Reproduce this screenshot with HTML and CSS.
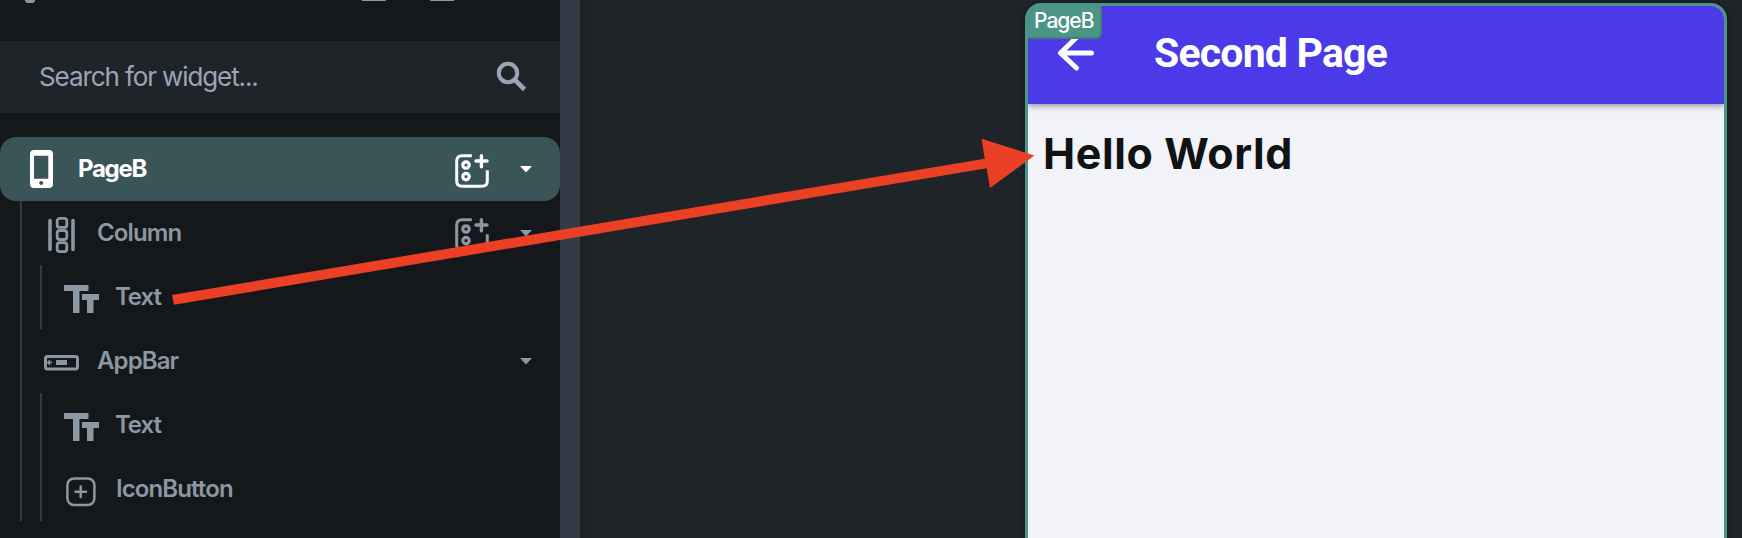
FILE: index.html
```html
<!DOCTYPE html>
<html lang="en">
<head>
<meta charset="utf-8">
<title>Widget tree</title>
<link rel="stylesheet" href="styles.css">
</head>
<body>
<svg class="defs" width="0" height="0">
  <symbol id="tt" viewBox="0 0 36 30"><path fill="currentColor" d="M0 0h24.500v6H15.500v22H9V6H0zM18 9h17v6h-5.500v13H23V15h-5z"/></symbol>
  <symbol id="add" viewBox="0 0 34 34"><g fill="none" stroke="currentColor"><path stroke-width="3" d="M16.800 1.700H7Q1.700 1.700 1.700 7v20q0 5.300 5.300 5.300h20q5.300 0 5.300-5.300V16.300"/><circle cx="11" cy="11" r="3.200" stroke-width="3.200"/><circle cx="11" cy="22.600" r="3.200" stroke-width="3.200"/><path stroke-width="3.400" stroke-linecap="round" d="M26.400 1.700v11M21 7h11"/></g></symbol>
  <symbol id="caret" viewBox="0 0 12 7"><path fill="currentColor" d="M0 0h12L6 6.600z"/></symbol>
</svg>
<div class="app">
  <aside class="sidebar">
    <header class="toolbar">
      <span class="knob"></span><span class="tool"></span><span class="tool"></span>
    </header>
    <div class="search">
      <span class="search-text">Search for widget...</span>
      <svg class="search-icon" width="32" height="32" viewBox="0 0 32 32" fill="none" stroke="currentColor"><circle cx="12" cy="12" r="9.200" stroke-width="4"/><path d="M19 19l9.500 9.500" stroke-width="4.600" stroke-linecap="butt"/></svg>
    </div>
    <div class="tree">
      <div class="row selected">
        <svg class="ic" width="23" height="38" viewBox="0 0 23 38"><path fill="#fff" fill-rule="evenodd" d="M4 0h15q4 0 4 4v30q0 4-4 4H4q-4 0-4-4V4q0-4 4-4zM4 5.700v23h14.300v-23zM11.200 31a2 2 0 1 0 .01 0z"/></svg>
        <span class="label">PageB</span>
        <svg class="add" width="34" height="34"><use href="#add"/></svg>
        <svg class="caret" width="12" height="7"><use href="#caret"/></svg>
      </div>
      <div class="branch outer">
        <div class="row column">
          <svg class="ic" width="27" height="36" viewBox="0 0 27 36" fill="none" stroke="currentColor"><path stroke-width="3.600" stroke-linecap="round" d="M2 3.500v29M25 3.500v29"/><g stroke-width="2.800"><rect x="9.200" y="1.400" width="9.600" height="9" rx="2.500"/><rect x="9.200" y="13.500" width="9.600" height="9" rx="2.500"/><rect x="9.200" y="25.600" width="9.600" height="9" rx="2.500"/></g></svg>
          <span class="label">Column</span>
          <svg class="add" width="34" height="34"><use href="#add"/></svg>
          <svg class="caret" width="12" height="7"><use href="#caret"/></svg>
        </div>
        <div class="branch">
          <div class="row leaf"><svg class="ic" width="36" height="30"><use href="#tt"/></svg><span class="label text">Text</span></div>
        </div>
        <div class="row appbar">
          <svg class="ic" width="36" height="16" viewBox="0 0 36 16" fill="none" stroke="currentColor"><rect x="1.500" y="1.500" width="32" height="12.500" rx="2" stroke-width="3"/><path fill="currentColor" stroke="none" d="M12 5h11v5H12z"/><path stroke-width="1.400" d="M8 7.500H4M6 5.200L3.700 7.500 6 9.800"/></svg>
          <span class="label bar-label">AppBar</span>
          <svg class="caret" width="12" height="7"><use href="#caret"/></svg>
        </div>
        <div class="branch">
          <div class="row leaf"><svg class="ic" width="36" height="30"><use href="#tt"/></svg><span class="label text">Text</span></div>
          <div class="row leaf iconbutton"><svg class="ic" width="30" height="30" viewBox="0 0 30 30" fill="none" stroke="currentColor"><rect x="1.400" y="1.400" width="27" height="26.500" rx="6.500" stroke-width="2.500"/><path stroke-width="2.500" stroke-linecap="round" d="M9.500 14.700h10.500M14.700 9.500V20"/></svg><span class="label ib-label">IconButton</span></div>
        </div>
      </div>
    </div>
  </aside>
  <div class="divider"></div>
  <main class="canvas">
    <div class="phone">
      <div class="phone-bar">
        <svg class="back" width="36" height="40" viewBox="0 0 36 40" fill="none" stroke="#fff" stroke-width="5" stroke-linecap="round" stroke-linejoin="round"><path d="M33.500 20H3M18.500 4.500L2.500 20l16 15"/></svg>
        <span class="title">Second Page</span>
      </div>
      <div class="phone-body"><span class="hello">Hello World</span></div>
      <div class="tag"><span>PageB</span></div>
    </div>
  </main>
  <svg class="arrow" width="1742" height="538" viewBox="0 0 1742 538"><path fill="#eb4025" d="M172 295L984.700 158.700 981.600 138.800 1034.500 155.500 990 188 986.700 168.300 174 304.700z"/></svg>
</div>
</body>
</html>
```
FILE: styles.css
```css
* { box-sizing: border-box; }
body { margin: 0; font-family: Inter, "Liberation Sans", sans-serif; }
svg { display: block; flex: none; }
.defs { position: absolute; }
.app { position: relative; display: flex; width: 1742px; height: 538px; overflow: hidden; background: #1f2428; }
.sidebar { width: 560px; background: #14181b; color: #8b97a2; }
.toolbar { display: flex; height: 41px; padding-left: 25px; }
.knob { width: 10px; height: 3px; background: #8b97a2; border-radius: 0 0 5px 5px; margin-right: 327px; }
.tool { width: 24px; height: 1px; background: #8b97a2; margin-right: 44px; }
.search { display: flex; align-items: center; height: 72px; padding: 0 32px 0 39px; background: #1f2428; color: #9ba5b7; }
.search-text { flex: 1; font-size: 26px; letter-spacing: -1.1px; line-height: 32px; white-space: nowrap; }
.tree { padding-top: 24px; }
.row { display: flex; align-items: center; height: 64px; padding-right: 28px; }
.selected { background: #395558; color: #fff; border-radius: 16px; padding-left: 30px; }
.label { margin-right: auto; font-size: 24px; font-weight: 600; line-height: 30px; letter-spacing: -0.9px; white-space: nowrap; }
.selected .label { margin-left: 25px; font-weight: 700; letter-spacing: -1.3px; }
.text { letter-spacing: -1.1px; }
.add { margin: 3px 31px 0 0; }
.branch { border-left: 2px solid #343a45; margin-left: 18px; }
.outer { margin-left: 20px; }
.column { padding-left: 26px; }
.column .ic { margin-top: 4px; }
.column .label { margin-left: 22px; }
.leaf { padding-left: 22px; }
.leaf .ic { margin-top: 5px; }
.leaf .label { margin-left: 15px; }
.appbar { padding-left: 22px; }
.appbar .label { margin-left: 17px; }
.appbar .ic { margin-top: 4px; }
.iconbutton { padding-left: 24px; }
.iconbutton .ib-label { margin-left: 20px; }
.divider { width: 20px; background: #343a45; }
.canvas { flex: 1; padding: 3px 0 0 445px; background: linear-gradient(90deg, #1d2225, #1f2428 12px); }
.phone { position: relative; width: 702px; height: 555px; border: 3px solid #4b9587; border-radius: 16px; background: #f1f3f8; overflow: hidden; box-shadow: 0 0 6px rgba(0,0,0,.3); }
.phone-bar { display: flex; align-items: center; height: 98px; padding-left: 30px; background: #4a3ae8; box-shadow: 0 2px 6px rgba(0,0,0,.4); }
.back { margin-bottom: 5px; }
.title { margin: 0 0 4px 60px; font-family: Roboto, sans-serif; font-size: 41px; font-weight: 700; letter-spacing: -0.8px; color: #fff; white-space: nowrap; }
.phone-body { padding: 23px 0 0 15px; }
.hello { font-size: 43px; font-weight: 700; letter-spacing: 0.6px; line-height: 52px; color: #101214; white-space: nowrap; }
.tag { position: absolute; left: -4px; top: -3px; height: 36px; width: 78px; padding: 3px 0 0 8px; background: #4b9587; border: 2px solid #428074; border-radius: 14px 0 6px 0; color: #fff; font-size: 21px; font-weight: 500; letter-spacing: -1px; line-height: 26px; }
.arrow { position: absolute; left: 0; top: 0; pointer-events: none; }
```
